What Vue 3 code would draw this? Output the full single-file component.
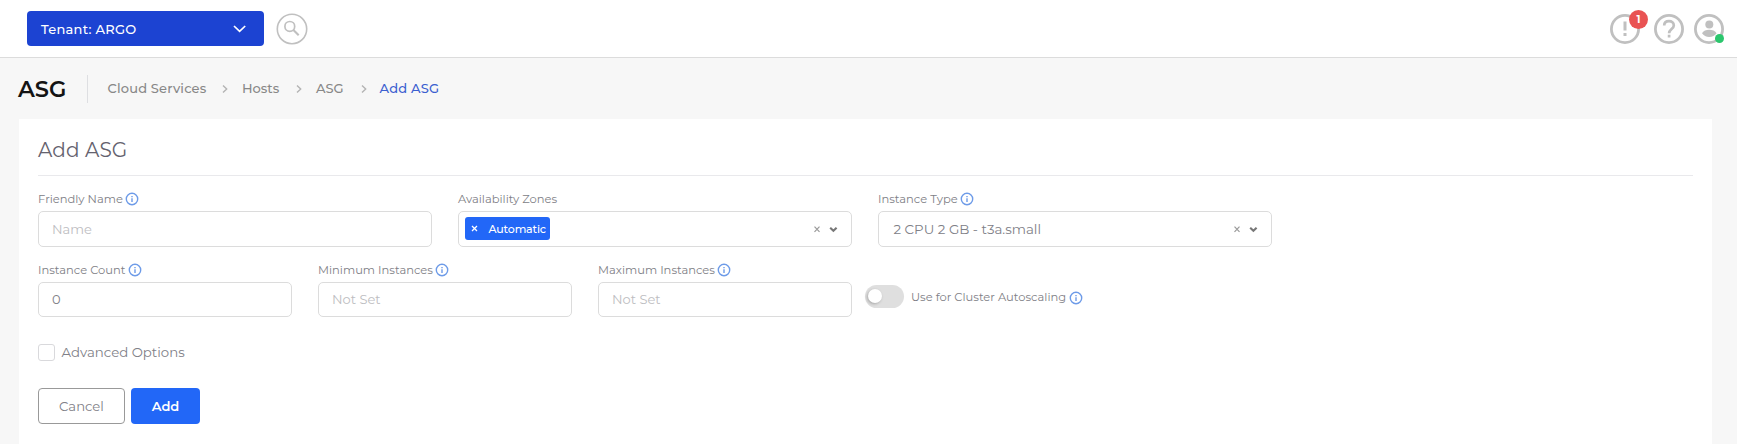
<script setup>
import { h } from 'vue'

const crumbs = [
  { text: 'Cloud Services', cls: 'c-services' },
  { text: 'Hosts', cls: 'c-hosts' },
  { text: 'ASG', cls: 'c-asg' },
]

const InfoIcon = () =>
  h('svg', { width: 14, height: 14, viewBox: '0 0 14 14', fill: 'none', stroke: '#6d9be8', 'stroke-width': 1.4 }, [
    h('circle', { cx: 7, cy: 7, r: 5.7 }),
    h('path', { d: 'M7 6.3V10M7 4v1.3' }),
  ])

const SelectIcons = () =>
  h('svg', { width: 26, height: 12, viewBox: '0 0 26 12', fill: 'none' }, [
    h('path', { d: 'M1.5 3.7l5 5.2M6.5 3.7l-5 5.2', stroke: '#999', 'stroke-width': 1.2 }),
    h('path', { d: 'M17.2 4.7l3.2 3.1 3.2-3.1', stroke: '#777', 'stroke-width': 2.1 }),
  ])
</script>

<template>
  <div class="page">
    <header class="topbar">
      <button class="tenant">
        <span class="t-tenant">Tenant: ARGO</span>
        <svg width="14" height="10" viewBox="0 0 14 10" fill="none" stroke="#fff" stroke-width="1.7"><path d="M1 2l5.600 5.400L12.200 2" /></svg>
      </button>
      <svg class="search" width="32" height="32" viewBox="0 0 32 32" fill="none" stroke="#c0c0c0">
        <circle cx="16" cy="16" r="14.7" stroke-width="1.6" />
        <circle cx="13.8" cy="13.4" r="4.9" stroke-width="1.7" />
        <path d="M17.4 17l5.3 5.3" stroke-width="2.1" />
      </svg>
      <div class="actions">
        <div class="action">
          <svg width="30" height="30" viewBox="0 0 30 30" fill="none" stroke="#c0c0c0">
            <circle cx="15" cy="15" r="13.6" stroke-width="2.8" />
            <path d="M15 7.6v8.900M15 19v3" stroke-width="3" />
          </svg>
          <span class="badge">1</span>
        </div>
        <div class="action">
          <svg width="30" height="30" viewBox="0 0 30 30" fill="none" stroke="#c0c0c0">
            <circle cx="15" cy="15" r="13.6" stroke-width="2.8" />
            <path d="M10.2 11.6C10.2 8.7 12.3 7.2 15 7.2s4.8 1.6 4.8 4.2c0 3.4-4.7 3.8-4.7 7.8M15.1 20.7v2.7" stroke-width="2.7" />
          </svg>
        </div>
        <div class="action">
          <svg width="30" height="30" viewBox="0 0 30 30">
            <circle cx="15" cy="15" r="13.6" fill="none" stroke="#c0c0c0" stroke-width="2.8" />
            <circle cx="15.3" cy="10.4" r="4" fill="#c0c0c0" />
            <path d="M8 19.3c1.2-2.5 4.2-3.6 7.2-3.6s6.2 1.1 7.4 3.6c-1.6 2.4-4.3 3.8-7.4 3.8S9.6 21.7 8 19.3z" fill="#c0c0c0" />
          </svg>
          <span class="online"></span>
        </div>
      </div>
    </header>

    <nav class="crumbbar">
      <h1>ASG</h1>
      <template v-for="c in crumbs" :key="c.text">
        <span class="crumb" :class="c.cls">{{ c.text }}</span>
        <svg class="sep" width="6" height="10" viewBox="0 0 6 10" fill="none" stroke="#b4b4b4" stroke-width="1.4"><path d="M1 1.5l3.7 3.5L1 8.5" /></svg>
      </template>
      <span class="crumb current">Add ASG</span>
    </nav>

    <main class="card">
      <h2><span>Add ASG</span></h2>
      <div class="row wide">
        <div class="field">
          <label><span>Friendly Name</span><InfoIcon /></label>
          <div class="control"><span class="placeholder">Name</span></div>
        </div>
        <div class="field">
          <label><span>Availability Zones</span></label>
          <div class="control multi">
            <span class="tag">
              <svg width="7" height="7" viewBox="0 0 7 7" stroke="#fff" stroke-width="1.3"><path d="M1 1l5 5M6 1L1 6" /></svg>
              <span>Automatic</span>
            </span>
            <SelectIcons class="tools" />
          </div>
        </div>
        <div class="field">
          <label><span>Instance Type</span><InfoIcon /></label>
          <div class="control"><span class="value selected">2 CPU 2 GB - t3a.small</span><SelectIcons class="tools" /></div>
        </div>
      </div>
      <div class="row narrow">
        <div class="field">
          <label><span>Instance Count</span><InfoIcon /></label>
          <div class="control"><span class="value">0</span></div>
        </div>
        <div class="field">
          <label><span>Minimum Instances</span><InfoIcon /></label>
          <div class="control"><span class="placeholder">Not Set</span></div>
        </div>
        <div class="field">
          <label><span>Maximum Instances</span><InfoIcon /></label>
          <div class="control"><span class="placeholder">Not Set</span></div>
        </div>
        <div class="switch">
          <span class="track"><span class="knob"></span></span>
          <label><span>Use for Cluster Autoscaling</span><InfoIcon class="low" /></label>
        </div>
      </div>
      <div class="check"><span class="box"></span><span class="t-adv">Advanced Options</span></div>
      <div class="buttons">
        <button class="btn cancel"><span>Cancel</span></button>
        <button class="btn add"><span>Add</span></button>
      </div>
    </main>
  </div>
</template>

<style>
body { background: #f7f7f7; }
</style>

<style scoped>
* { box-sizing: border-box; }
.page { height: 444px; overflow: hidden; background: #f7f7f7; font-family: Montserrat, Inter, "Open Sans", sans-serif; color: #808087; font-size: 13px; white-space: nowrap; }
svg { display: block; flex: none; }
button { font: inherit; margin: 0; border: 0; padding: 0; }
.topbar { height: 58px; background: #fff; border-bottom: 1px solid #dcdcdc; display: flex; align-items: center; padding: 0 13px 0 26.5px; }
.tenant { width: 237px; height: 35px; background: #1c43d2; border-radius: 4px; color: #fff; display: flex; align-items: center; justify-content: space-between; padding: 0 17px 0 14.5px; font-weight: 550; }
.t-tenant { letter-spacing: .28px; }
.search { margin-left: 12.5px; }
.actions { margin-left: auto; display: flex; }
.action { position: relative; }
.action + .action { margin-left: 14px; }
.action:last-child { margin-left: 10px; }
.badge { position: absolute; left: 19px; top: -3.5px; width: 19px; height: 19px; border-radius: 50%; background: #e95353; color: #fff; font-size: 10px; font-weight: 700; line-height: 19px; text-align: center; }
.online { position: absolute; left: 21px; top: 20px; width: 9px; height: 9px; border-radius: 50%; background: #2bc66d; }
.crumbbar { height: 61px; display: flex; align-items: center; padding-left: 18px; }
h1 { margin: 0; width: 70px; height: 28px; line-height: 29px; border-right: 1px solid #dedfe2; color: #141414; font-size: 22.5px; font-weight: 600; }
.crumb { line-height: 20px; padding-bottom: 2px; color: #888; font-weight: 500; }
.c-services { width: 114.5px; margin-left: 19.5px; letter-spacing: .17px; }
.c-hosts { width: 54px; margin-left: 14px; }
.c-asg { width: 45px; margin-left: 14px; }
.crumb.current { margin-left: 12.5px; color: #3c5fd0; letter-spacing: .2px; }
.card { margin-left: 19px; width: 1693px; height: 325px; background: #fff; padding: 0 19px; }
h2 { margin: 0; height: 57px; padding-top: 18px; line-height: 26px; border-bottom: 1px solid #e9e9ec; color: #64626e; font-size: 20px; font-weight: 450; letter-spacing: .1px; }
.row { display: flex; gap: 26px; }
.wide { padding-top: 16px; }
.narrow { padding-top: 16px; }
.wide .field { width: 394px; }
.narrow .field { width: 254px; }
label { display: flex; align-items: center; gap: 2.5px; height: 14px; font-size: 11.5px; color: #808086; }
.control { margin-top: 5px; height: 35.5px; border: 1.5px solid #dcdcdc; border-radius: 5px; display: flex; align-items: center; padding: 0 12.5px 0 13px; }
.placeholder { color: #bdbdc1; }
.selected { font-size: 13.4px; padding-left: 1.5px; }
.tools { margin-left: auto; }
.multi { padding-left: 6px; }
.tag { height: 23px; width: 84.5px; background: #2267f7; border-radius: 3px; color: #fff; font-size: 11px; font-weight: 500; display: flex; align-items: center; gap: 10.5px; padding-left: 6px; letter-spacing: -.15px; }
.switch { display: flex; height: 24px; margin: 22px 0 0 -13px; align-items: center; }
.track { width: 39px; height: 23px; border-radius: 12px; background: #dfdfdf; padding: 4px 3px; margin-right: 7px; }
.low { margin-top: 2px; }
.knob { display: block; width: 14px; height: 14px; border-radius: 50%; background: #fff; box-shadow: -1px 1px 3px rgba(0, 0, 0, .25); }
.check { display: flex; align-items: center; height: 17px; margin-top: 26.5px; }
.box { width: 17px; height: 17px; border: 1px solid #d9d9dc; border-radius: 3px; margin-right: 6.5px; }
.t-adv { font-size: 13.3px; }
.buttons { display: flex; gap: 6px; margin-top: 27px; }
.btn { height: 36px; border-radius: 4px; }
.cancel { width: 87px; border: 1px solid #999; background: #fff; color: #808087; font-size: 13.2px; }
.add { width: 69px; background: #2267f7; color: #fff; font-weight: 600; }
</style>
